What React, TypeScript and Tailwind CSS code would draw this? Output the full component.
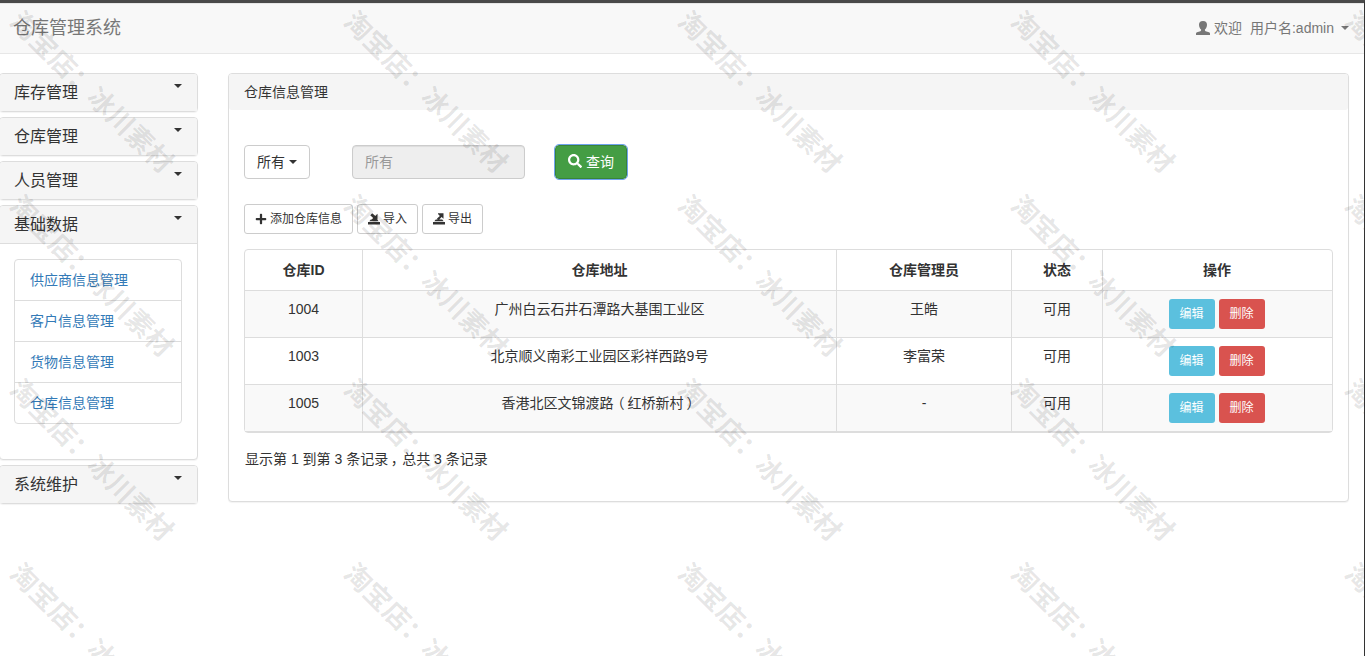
import React, { useState } from 'react';
import { FaPlus, FaSearch } from 'react-icons/fa';

interface Warehouse {
  id: number;
  address: string;
  admin: string;
  status: string;
}

const WAREHOUSES: Warehouse[] = [
  { id: 1004, address: '广州白云石井石潭路大基围工业区', admin: '王皓', status: '可用' },
  { id: 1003, address: '北京顺义南彩工业园区彩祥西路9号', admin: '李富荣', status: '可用' },
  { id: 1005, address: '香港北区文锦渡路（红桥新村）', admin: '-', status: '可用' },
];

const MENUS: { title: string; items: string[] }[] = [
  { title: '库存管理', items: [] },
  { title: '仓库管理', items: [] },
  { title: '人员管理', items: [] },
  { title: '基础数据', items: ['供应商信息管理', '客户信息管理', '货物信息管理', '仓库信息管理'] },
  { title: '系统维护', items: [] },
];

// centre points of the repeated watermark
const MARK_X = [91, 425, 759, 1092, 1426];
const MARK_Y = [90, 274, 458, 642];

const Caret: React.FC<{ className?: string }> = ({ className = '' }) => (
  <span className={`inline-block h-0 w-0 border-x-4 border-t-4 border-x-transparent border-t-current ${className}`} />
);

// full-width punctuation centred in its em box
const Centred: React.FC<{ text: string }> = ({ text }) => (
  <>
    {text.split(/([（），])/).map((part, i) =>
      /^[（），]$/.test(part) ? (
        <span key={i} className="inline-block w-[1em] text-center [font-feature-settings:'palt']">
          {part}
        </span>
      ) : (
        part
      )
    )}
  </>
);

const UserIcon: React.FC = () => (
  <svg width="14" height="14" viewBox="0 0 14 14" fill="currentColor">
    <path d="M7 0C4.200 0 3 1.500 3 3.700c0 2 .9 3.900 2.100 4.900v.7c0 .4-.3.700-.7.900L1 11.300c-.6.200-1 .7-1 1.300V14h14v-1.400c0-.6-.4-1.100-1-1.300l-3.400-1.100c-.4-.2-.7-.5-.7-.9v-.7c1.200-1 2.100-2.900 2.100-4.900C11 1.500 9.800 0 7 0z" />
  </svg>
);

const ImportIcon: React.FC = () => (
  <svg width="12" height="12" viewBox="0 0 12 12" fill="currentColor">
    <path d="M0 9h12v2.500H0zM1.300 8.300L2.800 6.500h6.400l1.500 1.800zM9.500.8v6.200H3.300l1.900-1.900L2.200 2.200 4.200.2l3.200 2.700z" />
  </svg>
);

const ExportIcon: React.FC = () => (
  <svg width="12" height="12" viewBox="0 0 12 12" fill="currentColor">
    <path d="M0 9h12v2.500H0zM1.300 8.300L2.800 6.500H4.600L4 5.500l2.900-2.600L5 1V.2h5.500v5.600L8.600 4 6.300 6.500h2.900l1.500 1.800z" />
  </svg>
);

const smallButton =
  'flex h-[30px] items-center gap-[3px] rounded-[3px] border border-[#ccc] bg-white pl-[10px] text-xs leading-none text-[#333]';

const Sidebar: React.FC = () => {
  const [open, setOpen] = useState<string>('基础数据');

  return (
    <aside className="-ml-px w-[199px] shrink-0 space-y-[5px]">
      {MENUS.map(({ title, items }) => {
        const expanded = open === title && items.length > 0;
        return (
          <div key={title} className="rounded border border-[#ddd] bg-white shadow-[0_1px_1px_rgba(0,0,0,0.05)]">
            <button
              onClick={() => setOpen(title)}
              className="flex h-[37px] w-full justify-between rounded-t-[3px] bg-[#f5f5f5] pr-[15px] pl-[14px] text-left text-base text-[#333]"
            >
              <span className="leading-[37px]">{title}</span>
              <Caret className="mt-[10px]" />
            </button>
            {expanded && (
              <div className="border-t border-[#ddd] pt-[15px] pr-[15px] pb-[35px] pl-[14px]">
                <ul className="divide-y divide-[#ddd] rounded border border-[#ddd]">
                  {items.map((item) => (
                    <li key={item} className="h-[41px] px-[15px] text-sm leading-[40px] text-[#337ab7] last:h-10">
                      <a href="#">{item}</a>
                    </li>
                  ))}
                </ul>
              </div>
            )}
          </div>
        );
      })}
    </aside>
  );
};

const WarehouseTable: React.FC = () => (
  <div className="mt-[15px] rounded border border-[#ddd]">
    <table className="w-full table-fixed border-separate border-spacing-0 text-center">
      <colgroup>
        <col className="w-[118px]" />
        <col className="w-[474px]" />
        <col className="w-[175px]" />
        <col className="w-[91px]" />
        <col />
      </colgroup>
      <thead>
        <tr className="h-[41px]">
          {['仓库ID', '仓库地址', '仓库管理员', '状态', '操作'].map((name) => (
            <th key={name} className="border-r border-b border-[#ddd] p-0 font-bold last:border-r-0 last:pr-px">
              {name}
            </th>
          ))}
        </tr>
      </thead>
      <tbody>
        {WAREHOUSES.map((row) => (
          <tr key={row.id} className="h-[47px] align-top odd:bg-[#f9f9f9]">
            {[row.id, row.address, row.admin, row.status].map((value, i) => (
              <td key={i} className="border-r border-b border-[#ddd] p-0 pt-2 leading-5">
                <Centred text={String(value)} />
              </td>
            ))}
            <td className="border-b border-[#ddd] p-0 pt-2 pr-0.5">
              <div className="flex justify-center gap-1 text-xs text-white">
                <button className="h-[30px] w-[46px] rounded-[3px] bg-[#5bc0de]">编辑</button>
                <button className="h-[30px] w-[46px] rounded-[3px] bg-[#d9534f]">删除</button>
              </div>
            </td>
          </tr>
        ))}
      </tbody>
    </table>
  </div>
);

const Watermark: React.FC = () => (
  <div className="pointer-events-none absolute inset-0 overflow-hidden">
    {MARK_Y.map((y) =>
      MARK_X.map((x) => (
        <span
          key={`${x}-${y}`}
          style={{ left: x, top: y }}
          className="absolute -translate-x-1/2 -translate-y-1/2 rotate-[44.600deg] text-[27px] leading-none font-bold whitespace-nowrap text-black/10"
        >
          淘宝店：冰川素材
        </span>
      ))
    )}
  </div>
);

const App: React.FC = () => {
  return (
    <div className="relative h-[656px] w-full overflow-hidden border-t-3 border-r border-t-[#4a4a4a] border-r-[#333] bg-white font-['Liberation_Sans','Noto_Sans_CJK_SC',sans-serif] text-sm text-[#333]">
      <nav className="flex h-[51px] items-center justify-between border-y border-[#e7e7e7] bg-[#f8f8f8] pr-[15px] pb-[2px] pl-[13px] text-[#777]">
        <span className="text-lg leading-none">仓库管理系统</span>
        <div className="flex items-center">
          <UserIcon />
          <span className="ml-1">欢迎</span>
          <span className="ml-2">用户名:admin</span>
          <Caret className="ml-[7px]" />
        </div>
      </nav>

      <div className="flex gap-[30px] pt-[19px] pr-[15px]">
        <Sidebar />

        <main className="h-[429px] flex-1 rounded border border-[#ddd] bg-white shadow-[0_1px_1px_rgba(0,0,0,0.05)]">
          <header className="h-9 rounded-[3px] bg-[#f5f5f5] px-[15px] leading-9">仓库信息管理</header>
          <div className="px-[15px] pt-[35px]">
            <div className="flex">
              <button className="flex h-[34px] w-[66px] items-center justify-center gap-1 rounded border border-[#ccc] bg-white">
                所有
                <Caret />
              </button>
              <input
                disabled
                placeholder="所有"
                className="ml-[42px] h-[34px] w-[173px] rounded border border-[#ccc] bg-[#eee] px-3 shadow-[inset_0_1px_1px_rgba(0,0,0,0.075)] placeholder:text-[#999]"
              />
              <button className="ml-[30px] flex h-[34px] w-[72px] items-center justify-center gap-1 rounded border border-[#398439] bg-[#449d44] text-white outline outline-[#6fa3ee]">
                <FaSearch size={14} className="-mt-0.5" />
                查询
              </button>
            </div>

            <div className="mt-[25px] flex gap-1">
              <button className={`${smallButton} w-[109px]`}>
                <FaPlus size={12} />
                添加仓库信息
              </button>
              <button className={`${smallButton} w-[61px]`}>
                <ImportIcon />
                导入
              </button>
              <button className={`${smallButton} w-[61px]`}>
                <ExportIcon />
                导出
              </button>
            </div>

            <WarehouseTable />

            <p className="mt-4 pl-px leading-5">
              <Centred text="显示第 1 到第 3 条记录，总共 3 条记录" />
            </p>
          </div>
        </main>
      </div>

      <Watermark />
    </div>
  );
};

export default App;
